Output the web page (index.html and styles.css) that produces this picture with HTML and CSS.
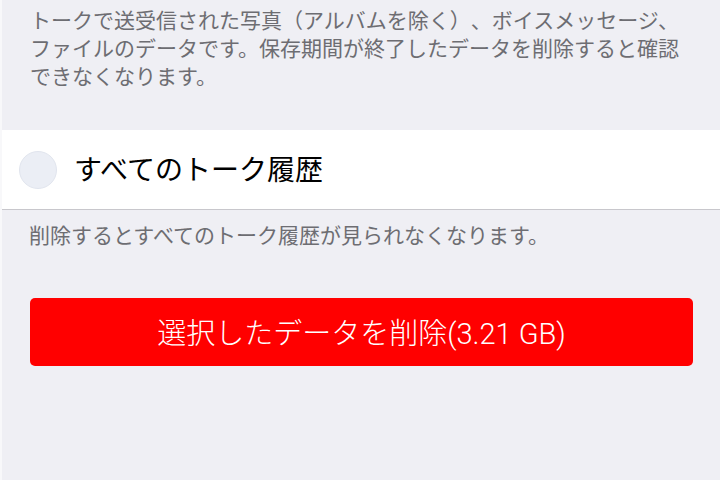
FILE: index.html
```html
<!DOCTYPE html>
<html lang="ja">
<head>
    <meta charset="UTF-8">
    <meta name="viewport" content="width=device-width, initial-scale=1.0">
    <title>データを削除</title>
    <link rel="stylesheet" href="styles.css">
</head>
<body>
    <div class="screen">
        <p class="section-note">
            トークで送受信された写真（アルバムを除く）、ボイスメッセージ、<br>
            ファイルのデータです。保存期間が終了したデータを削除すると確認<br>
            できなくなります。
        </p>

        <div class="option-row">
            <span class="radio"></span>
            <span class="option-label">すべてのトーク履歴</span>
        </div>

        <p class="option-note">削除するとすべてのトーク履歴が見られなくなります。</p>

        <button class="delete-button">選択したデータを削除(3.21 GB)</button>
    </div>
</body>
</html>
```

FILE: styles.css
```css
body {
    margin: 0;
    font-family: "Noto Sans CJK JP", "Liberation Sans", sans-serif;
    text-spacing-trim: space-all;
}

.screen {
    width: 718px;
    height: 480px;
    background-color: #efeff4;
    border-left: 2px solid #f8f8fa;
    overflow: hidden;
}

.section-note {
    margin: 0;
    padding: 5px 10px 0 28px;
    height: 125px;
    font-size: 21px;
    line-height: 28px;
    color: #6d6d72;
}

.option-row {
    display: flex;
    align-items: center;
    height: 79px;
    background-color: #ffffff;
    border-bottom: 1px solid #c8c7cc;
}

.radio {
    width: 36px;
    height: 36px;
    margin-left: 17px;
    border-radius: 50%;
    background-color: #ebeef5;
    border: 1px solid #e1e5ee;
}

.option-label {
    margin: 0 0 4px 17px;
    font-size: 28px;
    color: #000000;
}

.option-note {
    margin: 0;
    padding: 9px 10px 0 27px;
    font-size: 21px;
    line-height: 30px;
    color: #6d6d72;
}

.delete-button {
    display: block;
    width: 663px;
    height: 68px;
    margin: 49px 0 0 28px;
    padding: 0 0 2px;
    background-color: #ff0000;
    border: none;
    border-radius: 5px;
    color: #ffffff;
    font-family: Roboto, "Noto Sans CJK JP", sans-serif;
    font-size: 29px;
    font-weight: 300;
    cursor: pointer;
}
```
